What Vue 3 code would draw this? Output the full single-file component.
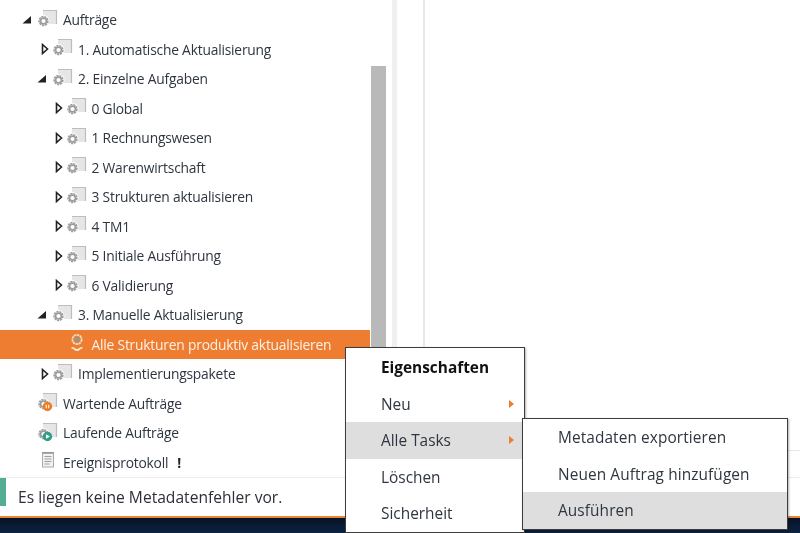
<script setup>
const rows = [
  { label: 'Aufträge', level: 0, caret: 'open', icon: 'job' },
  { label: '1. Automatische Aktualisierung', level: 1, caret: 'closed', icon: 'job' },
  { label: '2. Einzelne Aufgaben', level: 1, caret: 'open', icon: 'job' },
  { label: '0 Global', level: 2, caret: 'closed', icon: 'job' },
  { label: '1 Rechnungswesen', level: 2, caret: 'closed', icon: 'job' },
  { label: '2 Warenwirtschaft', level: 2, caret: 'closed', icon: 'job' },
  { label: '3 Strukturen aktualisieren', level: 2, caret: 'closed', icon: 'job' },
  { label: '4 TM1', level: 2, caret: 'closed', icon: 'job' },
  { label: '5 Initiale Ausführung', level: 2, caret: 'closed', icon: 'job' },
  { label: '6 Validierung', level: 2, caret: 'closed', icon: 'job' },
  { label: '3. Manuelle Aktualisierung', level: 1, caret: 'open', icon: 'job' },
  { label: 'Alle Strukturen produktiv aktualisieren', level: 2, caret: '', icon: 'medal', selected: true },
  { label: 'Implementierungspakete', level: 1, caret: 'closed', icon: 'job' },
  { label: 'Wartende Aufträge', level: 0, caret: '', icon: 'wait' },
  { label: 'Laufende Aufträge', level: 0, caret: '', icon: 'run' },
  { label: 'Ereignisprotokoll', level: 0, caret: '', icon: 'log', mark: '!' }
]
const menu = [
  { label: 'Eigenschaften', bold: true },
  { label: 'Neu', arrow: true },
  { label: 'Alle Tasks', arrow: true, active: true },
  { label: 'Löschen' },
  { label: 'Sicherheit' }
]
const submenu = [
  { label: 'Metadaten exportieren' },
  { label: 'Neuen Auftrag hinzufügen' },
  { label: 'Ausführen', active: true }
]
</script>

<template>
  <div class="page">
    <div class="main">
      <div class="tree">
        <div
          v-for="r in rows"
          :key="r.label"
          class="row"
          :class="['lv' + r.level, { selected: r.selected }]"
        >
          <span class="caret">
            <svg v-if="r.caret === 'open'" width="10" height="10" viewBox="0 0 10 10">
              <path d="M0.5 8.5 L9 8.5 L9 1 Z" fill="#222" />
            </svg>
            <svg v-else-if="r.caret === 'closed'" class="closed" width="8" height="12" viewBox="0 0 8 12">
              <path d="M1.5 1.5 L6.5 6 L1.5 10.5 Z" fill="#fff" stroke="#222" stroke-width="1.6" />
            </svg>
          </span>
          <svg class="icon" width="20" height="20" viewBox="0 0 20 20">
            <template v-if="r.icon === 'log'">
              <rect x="4.5" y="0.5" width="11" height="14.5" fill="#f1f1f1" stroke="#ababab" />
              <path d="M4.5 1h11" stroke="#8f8f8f" stroke-width="1.4" />
              <path d="M6.5 4.5h7M6.5 7h7M6.5 9.5h7M6.5 12h5" stroke="#a0a0a0" stroke-width="1" />
            </template>
            <template v-else-if="r.icon === 'medal'">
              <circle cx="10" cy="5.5" r="4.6" fill="none" stroke="#f8dcbc" stroke-width="1.8" stroke-dasharray="2.4 0.6" />
              <circle cx="10" cy="5.5" r="3" fill="#a8917a" />
              <path d="M4.5 14 Q6.5 13.5 7.5 15 Q10 17 12.5 15 Q13.5 13.5 15.5 14" fill="none" stroke="#fbe6cf" stroke-width="1.8" />
            </template>
            <template v-else>
              <path d="M5 0.5 H18.5 V14 H5 Z" fill="#e6e6e6" />
              <path d="M5 0.5 H18.5 V14" fill="none" stroke="#bdbdbd" stroke-width="1.2" />
              <circle cx="5.5" cy="11" r="6" fill="#fff" />
              <circle cx="5.5" cy="11" r="4.4" fill="none" stroke="#9c9c9c" stroke-width="1.6" stroke-dasharray="2.2 0.8" />
              <circle cx="5.5" cy="11" r="2.9" fill="#fff" stroke="#9c9c9c" stroke-width="1.6" />
              <template v-if="r.icon === 'wait'">
                <circle cx="9.5" cy="13.5" r="4.7" fill="#ee7d22" />
                <path d="M8.3 11.7v3.6M10.7 11.7v3.6" stroke="#fff" stroke-width="1.1" />
              </template>
              <template v-if="r.icon === 'run'">
                <circle cx="9.5" cy="13.5" r="4.7" fill="#2f9e85" />
                <path d="M8 11.3 L12 13.5 L8 15.7 Z" fill="#fff" />
              </template>
            </template>
          </svg>
          <span class="label">{{ r.label }}</span>
          <span v-if="r.mark" class="mark">{{ r.mark }}</span>
        </div>
      </div>
      <div class="scroll"><div class="thumb"></div></div>
      <div class="strip"></div>
      <div class="panel"><div class="panel-top"></div></div>
    </div>
    <div class="status">
      <span class="status-flag"></span>
      <span class="status-text">Es liegen keine Metadatenfehler vor.</span>
    </div>
    <div class="taskbar"></div>

    <div class="menu context">
      <div
        v-for="m in menu"
        :key="m.label"
        class="item"
        :class="{ active: m.active, bold: m.bold }"
      >
        <span>{{ m.label }}</span>
        <span v-if="m.arrow" class="arrow"></span>
      </div>
    </div>
    <div class="menu sub">
      <div
        v-for="m in submenu"
        :key="m.label"
        class="item"
        :class="{ active: m.active }"
      >
        <span>{{ m.label }}</span>
      </div>
    </div>
  </div>
</template>

<style scoped>
.page {
  position: relative;
  width: 800px;
  height: 533px;
  display: flex;
  flex-direction: column;
  overflow: hidden;
  background: #fff;
  font-family: "Open Sans", "Noto Sans", sans-serif;
  color: #2f3640;
  filter: blur(0.5px);
}
.main {
  flex: none;
  height: 477px;
  display: flex;
  border-bottom: 1px solid #ececec;
  box-sizing: content-box;
}
.tree {
  flex: none;
  width: 370px;
  padding-top: 5px;
  box-sizing: border-box;
  overflow: hidden;
}
.row {
  height: 29.5px;
  display: flex;
  align-items: center;
  font-size: 13.8px;
  letter-spacing: -0.2px;
  white-space: nowrap;
}
.lv0 { padding-left: 22px; }
.lv1 { padding-left: 37px; }
.lv2 { padding-left: 50.5px; }
.selected {
  background: #ee7d31;
  color: #fdf1e6;
}
.caret {
  flex: none;
  width: 16px;
  display: flex;
  align-items: center;
}
.closed {
  margin-left: 4px;
}
.icon {
  flex: none;
  margin-right: 5px;
}
.mark {
  margin-left: 9px;
  font-weight: 700;
  color: #222;
}
.scroll {
  flex: none;
  width: 15px;
  margin-left: 1px;
  padding-top: 66px;
  box-sizing: border-box;
}
.thumb {
  height: 400px;
  background: #b9b9b9;
}
.strip {
  flex: none;
  width: 5px;
  margin-left: 6px;
  background: #f0f0f0;
}
.panel {
  flex: 1;
  margin-left: 26px;
  border-left: 2px solid #e9e9e9;
}
.panel-top {
  height: 450px;
  border-bottom: 1px solid #e6e6e6;
}
.status {
  flex: none;
  height: 38px;
  display: flex;
  align-items: center;
  gap: 12px;
  border-bottom: 2px solid #e8863c;
  box-sizing: content-box;
}
.status-flag {
  flex: none;
  align-self: flex-start;
  width: 6px;
  height: 28px;
  background: #52ad92;
}
.status-text {
  font-size: 15.6px;
  color: #2b2f36;
}
.taskbar {
  flex: 1;
  background: linear-gradient(180deg, #071225, #0c2342);
}
.menu {
  position: absolute;
  background: #fff;
  border: 1px solid #3c3c3c;
  box-shadow: 1px 1px 2px rgba(0, 0, 0, 0.3);
  font-size: 15.4px;
  color: #2f3640;
}
.context {
  left: 345px;
  top: 347px;
  width: 178px;
  height: 183px;
  padding-top: 1px;
  box-sizing: content-box;
}
.sub {
  left: 522px;
  top: 418px;
  width: 264px;
  letter-spacing: 0.1px;
}
.item {
  height: 36.5px;
  display: flex;
  align-items: center;
  position: relative;
  padding-left: 35px;
  padding-top: 1px;
  box-sizing: border-box;
}
.bold {
  font-weight: 700;
  color: #111;
}
.active {
  background: #dedede;
}
.arrow {
  position: absolute;
  left: 163px;
  top: 14px;
  width: 0;
  height: 0;
  border-left: 5px solid #ee7d31;
  border-top: 4px solid transparent;
  border-bottom: 4px solid transparent;
}
</style>

<style>
html, body { margin: 0; padding: 0; background: #fff; }
</style>
